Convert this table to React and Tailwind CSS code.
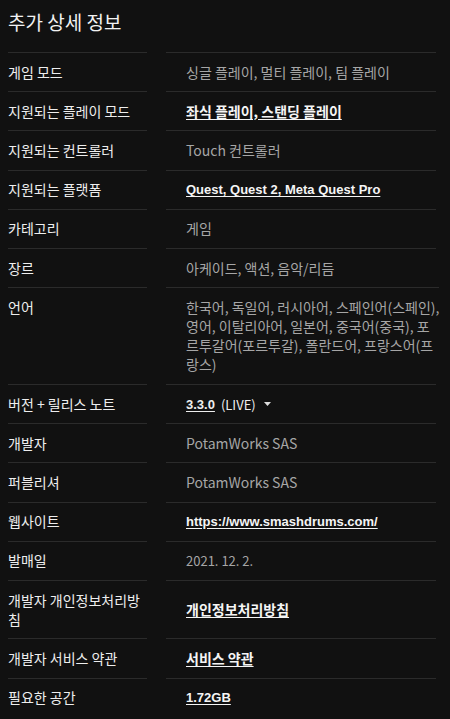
import React from "react";

const rows = [
  { label: "게임 모드", value: "싱글 플레이, 멀티 플레이, 팀 플레이" },
  { label: "지원되는 플레이 모드", value: "좌식 플레이, 스탠딩 플레이", link: true },
  { label: "지원되는 컨트롤러", value: "Touch 컨트롤러" },
  { label: "지원되는 플랫폼", value: "Quest, Quest 2, Meta Quest Pro", link: true, latin: true },
  { label: "카테고리", value: "게임" },
  { label: "장르", value: "아케이드, 액션, 음악/리듬" },
  {
    label: "언어",
    lines: [
      "한국어, 독일어, 러시아어, 스페인어(스페인),",
      "영어, 이탈리아어, 일본어, 중국어(중국), 포",
      "르투갈어(포르투갈), 폴란드어, 프랑스어(프",
      "랑스)",
    ],
  },
  { label: "버전 + 릴리스 노트", version: true },
  { label: "개발자", value: "PotamWorks SAS" },
  { label: "퍼블리셔", value: "PotamWorks SAS" },
  { label: "웹사이트", value: "https://www.smashdrums.com/", link: true, latin: true },
  { label: "발매일", value: "2021. 12. 2.", small: true },
  { label: "개발자 개인정보처리방침", value: "개인정보처리방침", link: true },
  { label: "개발자 서비스 약관", value: "서비스 약관", link: true },
  { label: "필요한 공간", value: "1.72GB", link: true, latin: true },
];

const latinFont = { fontFamily: '"Liberation Sans", Arial, sans-serif' };

export default function App() {
  return (
    <div
      className="min-h-[719px] w-[450px] bg-[#111111] pl-2 pr-[14px] text-[14px] leading-[19.2px]"
      style={{ fontFamily: '"Noto Sans CJK KR", "Noto Sans", sans-serif' }}
    >
      <h2 className="pt-[6px] pb-[15px] text-[19px] leading-[31px] text-[#f2f2f2]">추가 상세 정보</h2>
      {rows.map((r, i) => (
        <div key={i} className="flex">
          <div className="w-[139px] shrink-0 border-t border-[#2b2b2b] py-[9.5px] text-[#eeeeee] break-all">
            {r.label}
          </div>
          <div className="ml-[19px] flex flex-1 items-center border-t border-[#2b2b2b] py-[9.5px] pl-5">
            {r.version ? (
              <span className="flex items-center text-[#eeeeee]">
                <span className="text-[13px] font-bold underline underline-offset-2" style={latinFont}>
                  3.3.0
                </span>
                <span className="ml-[6px] text-[13px]">(LIVE)</span>
                <svg className="ml-[8px]" width="7" height="4" viewBox="0 0 7 4">
                  <path d="M0 0h7L3.5 4z" fill="#dddddd" />
                </svg>
              </span>
            ) : r.lines ? (
              <span className="text-[#a6a6a6]">
                {r.lines.map((l, j) => (
                  <span key={j} className="block whitespace-nowrap">
                    {l}
                  </span>
                ))}
              </span>
            ) : r.link ? (
              r.latin ? (
                <span
                  className="text-[13px] font-bold text-[#f5f5f5] underline underline-offset-2"
                  style={latinFont}
                >
                  {r.value}
                </span>
              ) : (
                <span className="font-bold text-[#f5f5f5] underline underline-offset-2">{r.value}</span>
              )
            ) : r.small ? (
              <span className="text-[13px] text-[#a6a6a6]">{r.value}</span>
            ) : (
              <span className="text-[#a6a6a6]">{r.value}</span>
            )}
          </div>
        </div>
      ))}
    </div>
  );
}
